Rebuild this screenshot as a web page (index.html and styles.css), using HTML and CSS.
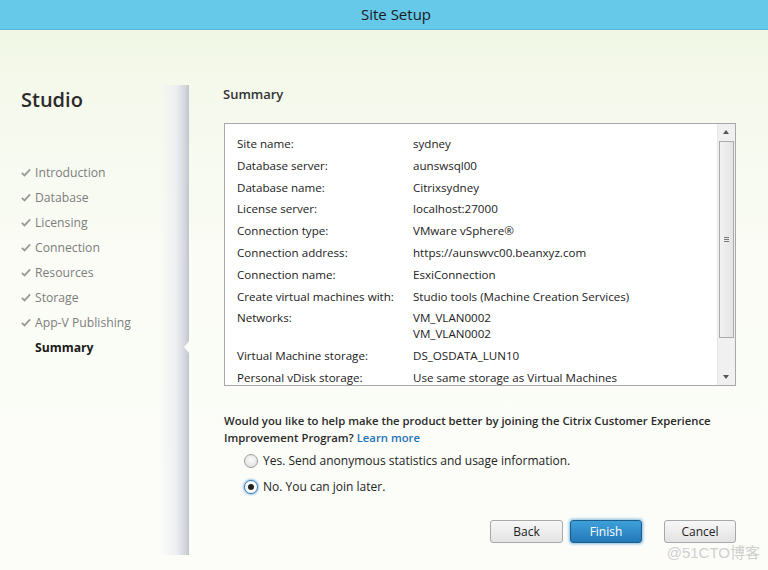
FILE: index.html
```html
<!DOCTYPE html>
<html>
<head>
<meta charset="utf-8">
<link rel="stylesheet" href="styles.css">
</head>
<body>
<div class="window">
  <div class="titlebar">Site Setup</div>
  <div class="main">
    <aside class="sidebar">
      <div class="panel">
        <h1 class="brand">Studio</h1>
        <ul class="steps">
          <li class="step done"><svg class="check" viewBox="0 0 12 10"><path d="M1 5.5 L4.2 8.5 L11 1.2" fill="none" stroke="#9a9a9a" stroke-width="2.2"/></svg>Introduction</li>
          <li class="step done"><svg class="check" viewBox="0 0 12 10"><path d="M1 5.5 L4.2 8.5 L11 1.2" fill="none" stroke="#9a9a9a" stroke-width="2.2"/></svg>Database</li>
          <li class="step done"><svg class="check" viewBox="0 0 12 10"><path d="M1 5.5 L4.2 8.5 L11 1.2" fill="none" stroke="#9a9a9a" stroke-width="2.2"/></svg>Licensing</li>
          <li class="step done"><svg class="check" viewBox="0 0 12 10"><path d="M1 5.5 L4.2 8.5 L11 1.2" fill="none" stroke="#9a9a9a" stroke-width="2.2"/></svg>Connection</li>
          <li class="step done"><svg class="check" viewBox="0 0 12 10"><path d="M1 5.5 L4.2 8.5 L11 1.2" fill="none" stroke="#9a9a9a" stroke-width="2.2"/></svg>Resources</li>
          <li class="step done"><svg class="check" viewBox="0 0 12 10"><path d="M1 5.5 L4.2 8.5 L11 1.2" fill="none" stroke="#9a9a9a" stroke-width="2.2"/></svg>Storage</li>
          <li class="step done"><svg class="check" viewBox="0 0 12 10"><path d="M1 5.5 L4.2 8.5 L11 1.2" fill="none" stroke="#9a9a9a" stroke-width="2.2"/></svg>App-V Publishing</li>
          <li class="step current">Summary</li>
        </ul>
      </div>
    </aside>
    <section class="content">
      <h2 class="heading">Summary</h2>
      <div class="summary-box">
        <div class="rows">
          <div class="label">Site name:</div><div class="value">sydney</div>
          <div class="label">Database server:</div><div class="value">aunswsql00</div>
          <div class="label">Database name:</div><div class="value">Citrixsydney</div>
          <div class="label">License server:</div><div class="value">localhost:27000</div>
          <div class="label">Connection type:</div><div class="value">VMware vSphere®</div>
          <div class="label">Connection address:</div><div class="value">https://aunswvc00.beanxyz.com</div>
          <div class="label">Connection name:</div><div class="value">EsxiConnection</div>
          <div class="label">Create virtual machines with:</div><div class="value">Studio tools (Machine Creation Services)</div>
          <div class="label">Networks:</div><div class="value">VM_VLAN0002<br>VM_VLAN0002</div>
          <div class="label">Virtual Machine storage:</div><div class="value">DS_OSDATA_LUN10</div>
          <div class="label">Personal vDisk storage:</div><div class="value">Use same storage as Virtual Machines</div>
        </div>
        <div class="scrollbar">
          <div class="arrow up"></div>
          <div class="thumb"><span class="grip"></span></div>
          <div class="track"></div>
          <div class="arrow down"></div>
        </div>
      </div>
      <p class="question">Would you like to help make the product better by joining the Citrix Customer Experience Improvement Program? <a class="link">Learn more</a></p>
      <div class="options">
        <label class="option"><span class="radio"></span>Yes. Send anonymous statistics and usage information.</label>
        <label class="option"><span class="radio checked"></span>No. You can join later.</label>
      </div>
      <div class="buttons">
        <button class="btn">Back</button>
        <button class="btn primary">Finish</button>
        <button class="btn cancel">Cancel</button>
      </div>
    </section>
  </div>
  <div class="watermark">@51CTO博客</div>
</div>
</body>
</html>
```
FILE: styles.css
```css
* { box-sizing: border-box; }
html, body { margin: 0; padding: 0; }
body {
  width: 768px;
  height: 570px;
  overflow: hidden;
  font-family: "Open Sans", "Noto Sans", sans-serif;
  color: #222;
}
.window {
  position: relative;
  width: 768px;
  height: 570px;
  display: flex;
  flex-direction: column;
  background: linear-gradient(to bottom, #eef6e0 0px, #f5f9ec 90px, #fafcf5 250px, #fcfdf9 100%);
}
.titlebar {
  height: 30px;
  flex: none;
  background: #66c9ea;
  border-bottom: 1px solid #59b4d6;
  text-align: center;
  font-size: 15px;
  line-height: 29px;
  color: #1a1a1a;
  padding-left: 24px;
}
.main {
  flex: 1;
  display: flex;
}
.sidebar {
  width: 189px;
  flex: none;
  padding: 55px 0 15px 0;
  display: flex;
}
.panel {
  flex: 1;
  padding: 0 0 0 21px;
  background: linear-gradient(to right, rgba(255,255,255,0) 0, rgba(255,255,255,0) 160px, rgba(236,238,242,0.9) 176px, #d0d3da 186px, #bfc3cc 189px);
}
.brand {
  margin: 0;
  font-size: 20px;
  font-weight: 600;
  color: #2b2b2b;
  line-height: 30px;
}
.steps {
  list-style: none;
  margin: 45px 0 0 0;
  padding: 0;
}
.step {
  height: 25px;
  line-height: 25px;
  font-size: 12.2px;
  color: #7d7d7d;
  display: flex;
  align-items: center;
  position: relative;
}
.check {
  width: 10px;
  height: 9px;
  margin-right: 4px;
}
.step.current {
  padding-left: 14px;
  font-weight: 700;
  color: #1a1a1a;
}
.step.current::after {
  content: "";
  position: absolute;
  right: 0;
  top: 6px;
  width: 0;
  height: 0;
  border-top: 6px solid transparent;
  border-bottom: 6px solid transparent;
  border-right: 5px solid #fbfcf7;
}
.content {
  flex: 1;
  padding: 0 32px 0 35px;
  display: flex;
  flex-direction: column;
}
.heading {
  margin: 55px 0 0 -1px;
  font-size: 13px;
  font-weight: 600;
  color: #333;
  line-height: 18px;
}
.summary-box {
  margin-top: 20px;
  height: 263px;
  border: 1px solid #a9a9a9;
  background: #fff;
  display: flex;
  overflow: hidden;
}
.rows {
  flex: 1;
  display: grid;
  grid-template-columns: 176px 1fr;
  row-gap: 5.8px;
  padding: 12px 0 0 12px;
  font-size: 11.6px;
  line-height: 16px;
  color: #222;
  align-content: start;
}
.scrollbar {
  width: 18px;
  flex: none;
  background: #f0f0f0;
  border-left: 1px solid #e6e6e6;
  display: flex;
  flex-direction: column;
  align-items: center;
}
.arrow {
  height: 17px;
  width: 100%;
  position: relative;
  flex: none;
}
.arrow::after {
  content: "";
  position: absolute;
  left: 5px;
  border-left: 3.5px solid transparent;
  border-right: 3.5px solid transparent;
}
.arrow.up::after { top: 6px; border-bottom: 4px solid #555; }
.arrow.down::after { top: 7px; border-top: 4px solid #555; }
.thumb {
  width: 15px;
  height: 197px;
  flex: none;
  border: 1px solid #ababab;
  background: linear-gradient(to right, #f1f1f1, #e4e4e4);
  display: flex;
  align-items: center;
  justify-content: center;
}
.grip {
  width: 5px;
  height: 5px;
  border-top: 1px solid #777;
  border-bottom: 1px solid #777;
  position: relative;
}
.grip::after {
  content: "";
  position: absolute;
  left: 0;
  right: 0;
  top: 1px;
  border-top: 1px solid #777;
}
.track { flex: 1; }
.question {
  margin: 26px 0 0 0;
  font-size: 11.3px;
  line-height: 17px;
  font-weight: 600;
  color: #2a2a2a;
}
.link { color: #1f72b8; }
.options {
  margin: 6px 0 0 20px;
  display: flex;
  flex-direction: column;
  gap: 9px;
}
.option {
  display: flex;
  align-items: center;
  font-size: 12px;
  line-height: 17px;
  color: #222;
}
.radio {
  width: 14px;
  height: 14px;
  border-radius: 50%;
  border: 1px solid #9a9a9a;
  background: radial-gradient(circle at 50% 40%, #fafafa, #dcdcdc);
  margin-right: 5px;
  position: relative;
}
.radio.checked {
  border-color: #3b7fb5;
  box-shadow: 0 0 2px 1px rgba(90,160,220,0.6);
  background: #fff;
}
.radio.checked::after {
  content: "";
  position: absolute;
  left: 3px;
  top: 3px;
  width: 6px;
  height: 6px;
  border-radius: 50%;
  background: #222;
}
.buttons {
  margin-top: 25px;
  display: flex;
  justify-content: flex-end;
  gap: 7px;
}
.btn {
  width: 73px;
  height: 23px;
  border: 1px solid #a8a8a8;
  border-radius: 3px;
  background: linear-gradient(to bottom, #f7f7f7, #e3e3e3);
  font-family: "Open Sans", "Noto Sans", sans-serif;
  font-size: 12px;
  color: #222;
  padding: 0;
}
.btn.primary {
  width: 72px;
  color: #fff;
  border: 1px solid #1c5c8c;
  background: linear-gradient(to bottom, #3ea0d9, #2479b8);
  box-shadow: 0 0 3px 1px rgba(80,160,220,0.7);
}
.btn.cancel { margin-left: 15px; width: 72px; }
.watermark {
  position: absolute;
  right: 8px;
  bottom: 8px;
  font-family: "Liberation Sans", "Noto Sans CJK SC", sans-serif;
  font-size: 15px;
  color: #cfcfcf;
}
```
